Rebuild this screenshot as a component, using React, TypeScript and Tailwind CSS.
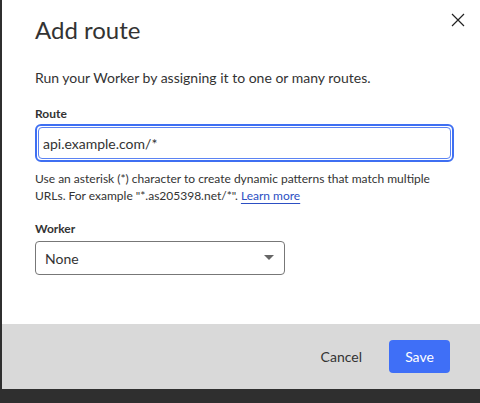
import React from 'react';

const font = { fontFamily: 'Lato, "Noto Sans", sans-serif' };

export default function App() {
  return (
    <div className="w-[480px] h-[403px] bg-[#2f2f2f] overflow-hidden flex flex-col" style={font}>
      <div className="ml-[2px] w-[478px] h-[389px] bg-white flex flex-col">
        <div className="relative flex-1 px-[33px] pt-[14px]">
          <button className="absolute right-[15px] top-[13px] w-[14px] h-[14px] text-[#222]">
            <svg viewBox="0 0 14 14" width="14" height="14" fill="none" stroke="currentColor" strokeWidth="1.2">
              <path d="M1 1 L13 13 M13 1 L1 13" />
            </svg>
          </button>
          <h2 className="text-[24px] leading-[32px] text-[#333] font-normal">Add route</h2>
          <p className="mt-[22px] text-[14px] leading-[20px] text-[#333]">
            Run your Worker by assigning it to one or many routes.
          </p>
          <label className="block mt-[18px] text-[12px] leading-[16px] font-bold text-[#333]">Route</label>
          <div className="mt-[2px] h-[38px] w-[419px] rounded-[6px] border-2 border-[#3f6ff2] p-[1px]">
            <div className="h-full rounded-[4px] border border-[#5b83f3] flex items-center px-[4px] text-[14px] text-[#333]">
              api.example.com/*
            </div>
          </div>
          <p className="mt-[8px] text-[12px] leading-[17px] text-[#333] w-[420px]">
            Use an asterisk (*) character to create dynamic patterns that match multiple URLs. For example "*.as205398.net/*".{' '}
            <a className="text-[#2c4fc3] underline underline-offset-[3px]">Learn more</a>
          </p>
          <label className="block mt-[17px] text-[12px] leading-[16px] font-bold text-[#333]">Worker</label>
          <div className="mt-[4px] h-[34px] w-[250px] rounded-[4px] border border-[#777] flex items-center justify-between pl-[9px] pr-[10px] text-[14px] text-[#333]">
            <span>None</span>
            <svg viewBox="0 0 10 6" width="10" height="6">
              <path d="M0 0 L10 0 L5 5 Z" fill="#666" />
            </svg>
          </div>
        </div>
        <div className="h-[65px] bg-[#d9d9d9] flex items-center justify-end gap-[27px] pr-[30px]">
          <button className="text-[14px] text-[#333]">Cancel</button>
          <button className="h-[33px] w-[61px] rounded-[4px] bg-[#3f6ff7] text-white text-[14px]">Save</button>
        </div>
      </div>
    </div>
  );
}
